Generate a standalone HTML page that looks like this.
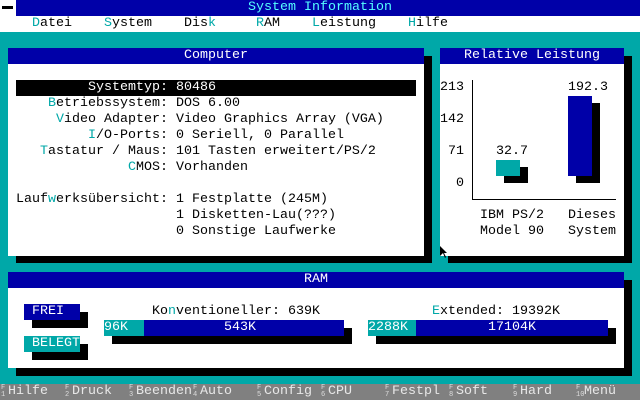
<!DOCTYPE html>
<html><head><meta charset="utf-8"><style>
*{margin:0;padding:0;box-sizing:border-box}
body{width:640px;height:400px;background:#00a8a8;position:relative;overflow:hidden;font-family:"Liberation Mono","DejaVu Sans Mono",monospace;font-size:13.33px;line-height:16px;font-weight:normal}
div{position:absolute}
.t{white-space:pre;height:16px}
.h{color:#00a8a8}
.w{color:#fff}
.k{background:#000}
.blue{background:#0000a8}
.cy{background:#00a8a8}
.wh{background:#fff}
.fk{color:#e8e8e8}
.sub{font-size:7px;line-height:7px;color:#ddd;white-space:pre}
</style></head><body>
<div class="blue" style="left:0;top:0;width:640px;height:16px"></div>
<div class="wh" style="left:0;top:0;width:16px;height:16px"></div>
<div class="k" style="left:2px;top:6px;width:11px;height:3px"></div>
<div class="t" style="left:248px;top:0;color:#55ffff">System Information</div>
<div class="wh" style="left:0;top:16px;width:640px;height:16px"></div>
<div class="t" style="left:32px;top:16px"><span class="h">D</span>atei</div>
<div class="t" style="left:104px;top:16px"><span class="h">S</span>ystem</div>
<div class="t" style="left:184px;top:16px">Dis<span class="h">k</span></div>
<div class="t" style="left:256px;top:16px"><span class="h">R</span>AM</div>
<div class="t" style="left:312px;top:16px"><span class="h">L</span>eistung</div>
<div class="t" style="left:408px;top:16px"><span class="h">H</span>ilfe</div>

<div class="k" style="left:16px;top:56px;width:416px;height:207px"></div>
<div class="wh" style="left:8px;top:48px;width:416px;height:208px"></div>
<div class="blue" style="left:8px;top:48px;width:416px;height:16px"></div>
<div class="t w" style="left:184px;top:48px">Computer</div>
<div class="k" style="left:16px;top:80px;width:400px;height:16px"></div>
<div class="t w" style="left:88px;top:80px">Systemtyp: 80486</div>
<div class="t" style="left:48px;top:96px"><span class="h">B</span>etriebssystem: DOS 6.00</div>
<div class="t" style="left:56px;top:112px"><span class="h">V</span>ideo Adapter: Video Graphics Array (VGA)</div>
<div class="t" style="left:88px;top:128px"><span class="h">I</span>/O-Ports: 0 Seriell, 0 Parallel</div>
<div class="t" style="left:40px;top:144px"><span class="h">T</span>astatur / Maus: 101 Tasten erweitert/PS/2</div>
<div class="t" style="left:128px;top:160px"><span class="h">C</span>MOS: Vorhanden</div>
<div class="t" style="left:16px;top:192px">Lauf<span class="h">w</span>erksübersicht: 1 Festplatte (245M)</div>
<div class="t" style="left:176px;top:208px">1 Disketten-Lau(???)</div>
<div class="t" style="left:176px;top:224px">0 Sonstige Laufwerke</div>

<div class="k" style="left:448px;top:56px;width:184px;height:207px"></div>
<div class="wh" style="left:440px;top:48px;width:184px;height:208px"></div>
<div class="blue" style="left:440px;top:48px;width:184px;height:16px"></div>
<div class="t w" style="left:464px;top:48px">Relative Leistung</div>
<div class="t" style="left:440px;top:80px">213</div>
<div class="t" style="left:440px;top:112px">142</div>
<div class="t" style="left:448px;top:144px">71</div>
<div class="t" style="left:456px;top:176px">0</div>
<div class="k" style="left:472px;top:80px;width:1px;height:120px"></div>
<div class="k" style="left:472px;top:199px;width:144px;height:1px"></div>
<div class="k" style="left:504px;top:167px;width:24px;height:16px"></div>
<div class="cy" style="left:496px;top:160px;width:24px;height:16px"></div>
<div class="t" style="left:496px;top:144px">32.7</div>
<div class="k" style="left:576px;top:103px;width:24px;height:80px"></div>
<div class="blue" style="left:568px;top:96px;width:24px;height:80px"></div>
<div class="t" style="left:568px;top:80px">192.3</div>
<div class="t" style="left:480px;top:208px">IBM PS/2</div>
<div class="t" style="left:480px;top:224px">Model 90</div>
<div class="t" style="left:568px;top:208px">Dieses</div>
<div class="t" style="left:568px;top:224px">System</div>
<svg style="position:absolute;left:440px;top:246px" width="8" height="14"><path d="M0 0V10L3 7L5 12L6 11L4 7H7Z" fill="#000"/></svg>

<div class="k" style="left:16px;top:280px;width:616px;height:96px"></div>
<div class="wh" style="left:8px;top:272px;width:616px;height:96px"></div>
<div class="blue" style="left:8px;top:272px;width:616px;height:16px"></div>
<div class="t w" style="left:304px;top:272px">RAM</div>
<div class="k" style="left:32px;top:312px;width:56px;height:16px"></div>
<div class="blue" style="left:24px;top:304px;width:56px;height:16px"></div>
<div class="t w" style="left:32px;top:304px">FREI</div>
<div class="k" style="left:32px;top:344px;width:56px;height:16px"></div>
<div class="cy" style="left:24px;top:336px;width:56px;height:16px"></div>
<div class="t w" style="left:32px;top:336px">BELEGT</div>
<div class="t" style="left:152px;top:304px">Ko<span class="h">n</span>ventioneller: 639K</div>
<div class="k" style="left:112px;top:328px;width:240px;height:16px"></div>
<div class="blue" style="left:104px;top:320px;width:240px;height:16px"></div>
<div class="cy" style="left:104px;top:320px;width:40px;height:16px"></div>
<div class="t w" style="left:104px;top:320px">96K</div>
<div class="t w" style="left:224px;top:320px">543K</div>
<div class="t" style="left:432px;top:304px"><span class="h">E</span>xtended: 19392K</div>
<div class="k" style="left:376px;top:328px;width:240px;height:16px"></div>
<div class="blue" style="left:368px;top:320px;width:240px;height:16px"></div>
<div class="cy" style="left:368px;top:320px;width:48px;height:16px"></div>
<div class="t w" style="left:368px;top:320px">2288K</div>
<div class="t w" style="left:488px;top:320px">17104K</div>

<div style="left:0;top:384px;width:640px;height:16px;background:#808080"></div>
<div class="sub" style="left:1px;top:385px">F<br>1</div><div class="t fk" style="left:8px;top:384px">Hilfe</div>
<div class="sub" style="left:65px;top:385px">F<br>2</div><div class="t fk" style="left:72px;top:384px">Druck</div>
<div class="sub" style="left:129px;top:385px">F<br>3</div><div class="t fk" style="left:136px;top:384px">Beenden</div>
<div class="sub" style="left:193px;top:385px">F<br>4</div><div class="t fk" style="left:200px;top:384px">Auto</div>
<div class="sub" style="left:257px;top:385px">F<br>5</div><div class="t fk" style="left:264px;top:384px">Config</div>
<div class="sub" style="left:321px;top:385px">F<br>6</div><div class="t fk" style="left:328px;top:384px">CPU</div>
<div class="sub" style="left:385px;top:385px">F<br>7</div><div class="t fk" style="left:392px;top:384px">Festpl</div>
<div class="sub" style="left:449px;top:385px">F<br>8</div><div class="t fk" style="left:456px;top:384px">Soft</div>
<div class="sub" style="left:513px;top:385px">F<br>9</div><div class="t fk" style="left:520px;top:384px">Hard</div>
<div class="sub" style="left:576px;top:385px">F<br>10</div><div class="t fk" style="left:584px;top:384px">Menü</div>
</body></html>
